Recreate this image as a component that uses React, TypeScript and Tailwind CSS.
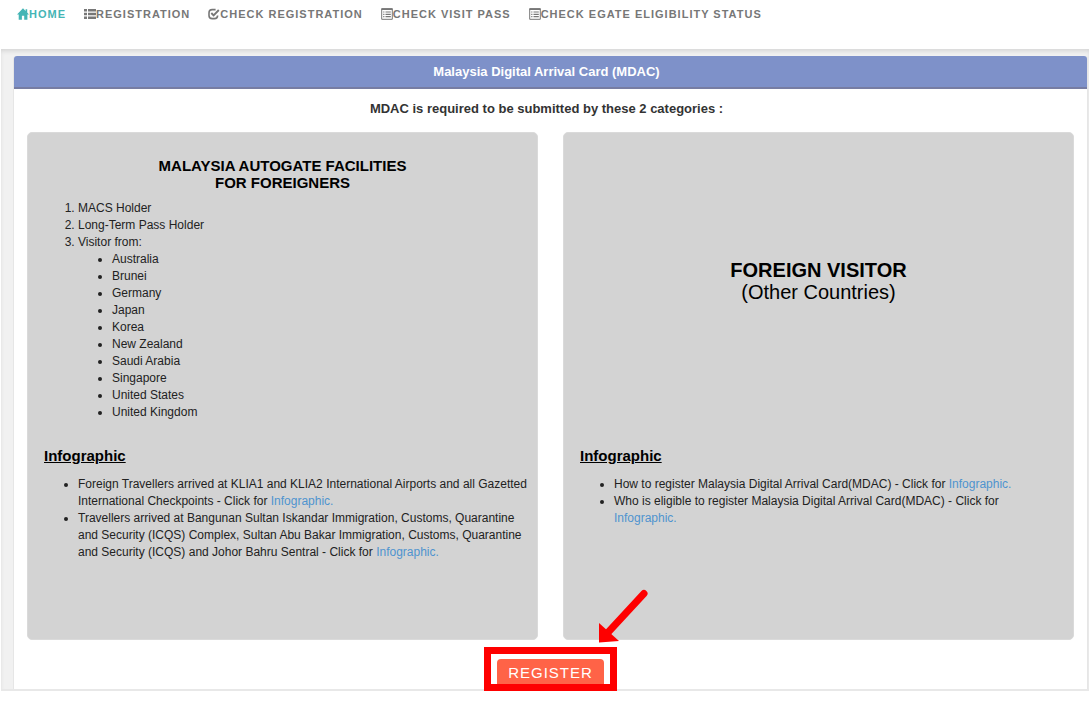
import type { ReactNode } from "react";

function HomeIcon() {
  return (
    <svg viewBox="0 0 12 12" className="h-3 w-3 shrink-0" fill="currentColor" aria-hidden="true">
      <path d="M6 0.3 L8.6 2.9 V1.2 H10.2 V4.5 L12 6.4 H10.4 V11.7 H7.2 V7.8 H4.9 V11.7 H1.7 V6.4 H0 Z" />
    </svg>
  );
}

function ThListIcon() {
  return (
    <svg viewBox="0 0 12 12" className="h-3 w-3 shrink-0" fill="currentColor" aria-hidden="true">
      <path d="M0 1h3v2.6H0zM4 1h8v2.6H4zM0 4.7h3v2.6H0zM4 4.7h8v2.6H4zM0 8.4h3V11H0zM4 8.4h8V11H4z" />
    </svg>
  );
}

function CheckIcon() {
  return (
    <svg viewBox="0 0 12 12" className="h-3 w-3 shrink-0" fill="none" stroke="currentColor" aria-hidden="true">
      <path d="M7.6 1.6 H4.2 Q1 1.6 1 4.8 V7.4 Q1 10.6 4.2 10.6 H6.4 Q9.6 10.6 9.6 7.4" strokeWidth="1.6" />
      <path d="M3.3 5 L5.6 7.4 L10.8 2" strokeWidth="1.9" />
    </svg>
  );
}

function ListAltIcon() {
  return (
    <svg viewBox="0 0 12 12" className="h-3 w-3 shrink-0" fill="none" stroke="currentColor" aria-hidden="true">
      <path d="M0.7 0.7 H11.3 V11.3 H0.7 Z" strokeWidth="1" />
      <path d="M0.5 1.2 H11.5" strokeWidth="1.6" />
      <path d="M2.2 4 H3.4 M4.5 4 H9.8 M2.2 6.3 H3.4 M4.5 6.3 H9.8 M2.2 8.6 H3.4 M4.5 8.6 H9.8" strokeWidth="1.2" />
    </svg>
  );
}

const navItems = [
  { label: "HOME", icon: <HomeIcon />, active: true },
  { label: "REGISTRATION", icon: <ThListIcon /> },
  { label: "CHECK REGISTRATION", icon: <CheckIcon /> },
  { label: "CHECK VISIT PASS", icon: <ListAltIcon /> },
  { label: "CHECK EGATE ELIGIBILITY STATUS", icon: <ListAltIcon /> },
];

const countries = [
  "Australia",
  "Brunei",
  "Germany",
  "Japan",
  "Korea",
  "New Zealand",
  "Saudi Arabia",
  "Singapore",
  "United States",
  "United Kingdom",
];

function InfoLink() {
  return (
    <a href="#infographic" className="text-[#4f93cf]">
      Infographic.
    </a>
  );
}

function Infographic({ wide, children }: { wide?: boolean; children: ReactNode }) {
  return (
    <section className="h-[191px]">
      <h3 className="text-[15px] leading-4 font-bold text-black underline">Infographic</h3>
      <ul className={wide ? "-mr-3 mt-3 list-disc pl-[34px]" : "mt-3 list-disc pl-[34px]"}>
        {children}
      </ul>
    </section>
  );
}

function Category({ children }: { children: ReactNode }) {
  return (
    <article className="flex min-w-0 flex-col rounded-[5px] border border-[#dadada] bg-[#d3d3d3] px-4 pt-6 text-[#222]">
      {children}
    </article>
  );
}

export default function App() {
  return (
    <div className="bg-white pl-px font-['Liberation_Sans',Arial,sans-serif] text-xs leading-[17px] text-[#333]">
      <nav className="flex h-[49px] gap-[18px] pt-2 pl-4 text-[11px] leading-3 font-bold tracking-[1px] text-[#777]">
        {navItems.map((item) => (
          <a
            key={item.label}
            href="#"
            className={
              item.active
                ? "flex h-3 items-center whitespace-nowrap text-[#45b5b5]"
                : "flex h-3 items-center whitespace-nowrap"
            }
          >
            {item.icon}
            {item.label}
          </a>
        ))}
      </nav>

      <div className="border-b-2 border-[#e8e8e8] bg-[#f1f1f1] pt-[7px] pr-px pl-3 shadow-[inset_0_3px_4px_-1px_#d4d4d4]">
        <main className="rounded-t border-x border-[#e6e6e6] bg-white">
          <h1 className="h-[33px] rounded-t-[3px] border-b-2 border-[#777da3] bg-[#7e91c9] pr-2 text-center text-[13px] leading-8 font-bold text-white">
            Malaysia Digital Arrival Card (MDAC)
          </h1>
          <p className="pt-[11px] pr-2 text-center text-[13px] font-bold">
            MDAC is required to be submitted by these 2 categories :
          </p>

          <div className="mx-[13px] mt-[15px] grid min-h-[508px] grid-cols-2 gap-[25px]">
            <Category>
              <h2 className="text-center text-[15px] leading-[17px] font-bold text-black">
                MALAYSIA AUTOGATE FACILITIES
                <br />
                FOR FOREIGNERS
              </h2>
              <ol className="mt-[9px] flex-1 list-decimal pl-[34px]">
                <li>MACS Holder</li>
                <li>Long-Term Pass Holder</li>
                <li>
                  Visitor from:
                  <ul className="list-disc pl-[34px]">
                    {countries.map((country) => (
                      <li key={country}>{country}</li>
                    ))}
                  </ul>
                </li>
              </ol>
              <Infographic wide>
                <li>
                  Foreign Travellers arrived at KLIA1 and KLIA2 International Airports and all Gazetted
                  International Checkpoints - Click for <InfoLink />
                </li>
                <li>
                  Travellers arrived at Bangunan Sultan Iskandar Immigration, Customs, Quarantine and
                  Security (ICQS) Complex, Sultan Abu Bakar Immigration, Customs, Quarantine and Security
                  (ICQS) and Johor Bahru Sentral - Click for <InfoLink />
                </li>
              </Infographic>
            </Category>

            <Category>
              <div className="flex flex-1 flex-col items-center justify-center pb-[43px] text-xl leading-[22px] text-black">
                <h2 className="font-bold">FOREIGN VISITOR</h2>
                <p>(Other Countries)</p>
              </div>
              <Infographic>
                <li>
                  How to register Malaysia Digital Arrival Card(MDAC) - Click for <InfoLink />
                </li>
                <li>
                  Who is eligible to register Malaysia Digital Arrival Card(MDAC) - Click for <InfoLink />
                </li>
              </Infographic>
            </Category>
          </div>

          <div className="flex h-[49px] justify-center pt-[19px]">
            <div className="relative h-[27px]">
              <button
                type="button"
                className="h-full rounded-t bg-[#ff6347] px-[11px] text-[15px] leading-7 tracking-[1px] text-white"
              >
                REGISTER
              </button>
              <div className="pointer-events-none absolute -top-3 -right-[13px] -bottom-[5px] -left-[13px] border-[7px] border-[#fe0000]" />
              <svg
                viewBox="0 0 50 54"
                className="pointer-events-none absolute -top-[70px] -right-[44px] h-[54px] w-[50px]"
                aria-hidden="true"
              >
                <path d="M46 4.5 L9 44.5" stroke="#fe0000" strokeWidth="7" strokeLinecap="round" />
                <path d="M1 34 L1 53.5 L21 52 Z" fill="#fe0000" />
              </svg>
            </div>
          </div>
        </main>
      </div>
    </div>
  );
}
